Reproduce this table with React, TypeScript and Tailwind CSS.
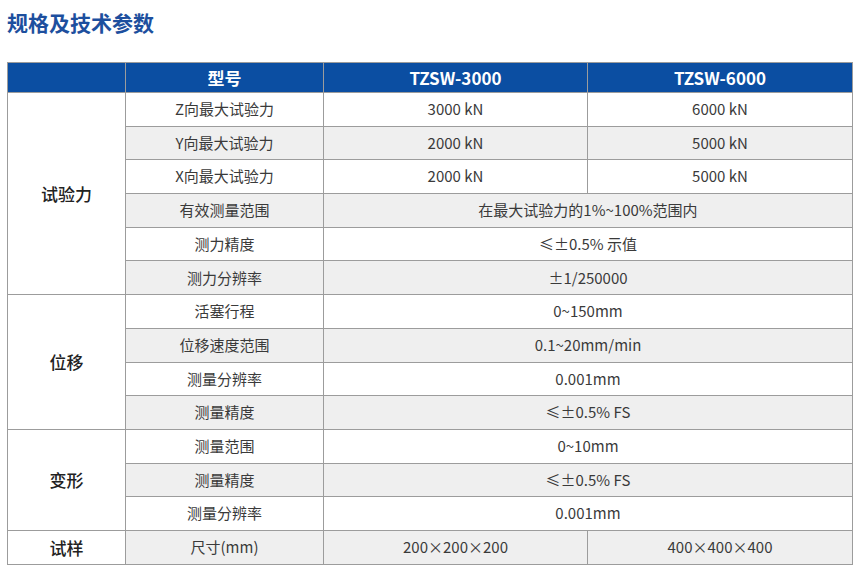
// Spec table: 规格及技术参数
type Row = { label: string; a: string; b?: string };
type Group = { name: string; rows: Row[] };

const GROUPS: Group[] = [
  {
    name: "试验力",
    rows: [
      { label: "Z向最大试验力", a: "3000 kN", b: "6000 kN" },
      { label: "Y向最大试验力", a: "2000 kN", b: "5000 kN" },
      { label: "X向最大试验力", a: "2000 kN", b: "5000 kN" },
      { label: "有效测量范围", a: "在最大试验力的1%~100%范围内" },
      { label: "测力精度", a: "≤±0.5% 示值" },
      { label: "测力分辨率", a: "±1/250000" },
    ],
  },
  {
    name: "位移",
    rows: [
      { label: "活塞行程", a: "0~150mm" },
      { label: "位移速度范围", a: "0.1~20mm/min" },
      { label: "测量分辨率", a: "0.001mm" },
      { label: "测量精度", a: "≤±0.5% FS" },
    ],
  },
  {
    name: "变形",
    rows: [
      { label: "测量范围", a: "0~10mm" },
      { label: "测量精度", a: "≤±0.5% FS" },
      { label: "测量分辨率", a: "0.001mm" },
    ],
  },
  {
    name: "试样",
    rows: [{ label: "尺寸(mm)", a: "200×200×200", b: "400×400×400" }],
  },
];

const cell = "border border-[#9c9c9c] text-center align-middle p-0";

export default function App() {
  let idx = 0;
  return (
    <div
      className="h-[568px] w-[860px] bg-white text-[#3a3a3a]"
      style={{ fontFamily: '"Noto Sans CJK SC", "Noto Sans", sans-serif' }}
    >
      <h1 className="pl-[7px] pt-[8px] text-[21px] font-bold leading-[29px] text-[#1d4f9e]">
        规格及技术参数
      </h1>
      <div className="pl-[7px] pt-[25px]">
        <table className="w-[845px] table-fixed border-collapse border border-[#9c9c9c] text-[15px]">
          <colgroup>
            <col className="w-[118px]" />
            <col className="w-[198px]" />
            <col className="w-[264px]" />
            <col className="w-[265px]" />
          </colgroup>
          <thead>
            <tr className="h-[30px] bg-[#0b4ea2] text-[17px] font-bold text-white">
              <th className={cell}></th>
              <th className={cell}>型号</th>
              <th className={cell}>TZSW-3000</th>
              <th className={cell}>TZSW-6000</th>
            </tr>
          </thead>
          <tbody>
            {GROUPS.map((g) =>
              g.rows.map((r, i) => {
                const shaded = idx++ % 2 === 1;
                const bg = shaded ? "bg-[#efefef]" : "bg-white";
                return (
                  <tr key={g.name + i} className="h-[33.7px]">
                    {i === 0 && (
                      <td
                        rowSpan={g.rows.length}
                        className={`${cell} bg-white text-[17px] font-medium text-[#222]`}
                      >
                        {g.name}
                      </td>
                    )}
                    <td className={`${cell} ${bg}`}>{r.label}</td>
                    {r.b ? (
                      <>
                        <td className={`${cell} ${bg}`}>{r.a}</td>
                        <td className={`${cell} ${bg}`}>{r.b}</td>
                      </>
                    ) : (
                      <td colSpan={2} className={`${cell} ${bg}`}>
                        {r.a}
                      </td>
                    )}
                  </tr>
                );
              })
            )}
          </tbody>
        </table>
      </div>
    </div>
  );
}
